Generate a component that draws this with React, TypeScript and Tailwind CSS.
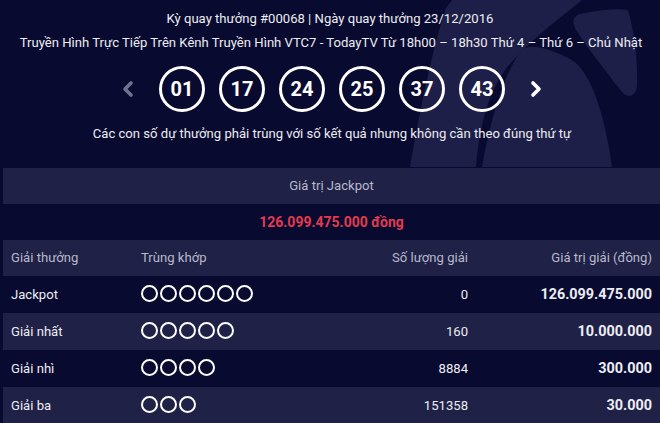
const balls = ['01', '17', '24', '25', '37', '43']

const prizes = [
  { name: 'Jackpot', match: 6, count: '0', value: '126.099.475.000' },
  { name: 'Giải nhất', match: 5, count: '160', value: '10.000.000' },
  { name: 'Giải nhì', match: 4, count: '8884', value: '300.000' },
  { name: 'Giải ba', match: 3, count: '151358', value: '30.000' },
]

function Watermark() {
  return (
    <svg className="absolute left-0 top-0" width="660" height="167" viewBox="0 0 660 167">
      <g fill="#1d1f48">
        <path d="M452 0 L582 0 C560 18 530 40 508 66 C490 90 480 120 476 167 L410 167 C420 110 432 50 446 8 Z" />
        <path d="M522 50 C530 44 545 46 572 60 C590 72 604 110 612 167 L482 167 C490 120 505 70 522 50 Z" />
        <path d="M580 14 C600 10 618 8 628 10 C634 30 638 60 637 86 C636 96 628 99 622 92 C605 70 585 45 575 28 C572 20 574 16 580 14 Z" />
      </g>
    </svg>
  )
}

function Chevron({ dir, color }: { dir: 'left' | 'right'; color: string }) {
  return (
    <div className="w-5 h-5 mx-[7px] flex items-center justify-center">
      <svg width="12" height="18" viewBox="0 0 12 18">
        <path
          d={dir === 'left' ? 'M9 3 L3 9 L9 15' : 'M3 3 L9 9 L3 15'}
          fill="none"
          stroke={color}
          strokeWidth="3.6"
          strokeLinecap="round"
          strokeLinejoin="round"
        />
      </svg>
    </div>
  )
}

export default function App() {
  return (
    <div
      className="relative w-[660px] h-[423px] overflow-hidden bg-[#080a2f] text-[#ededf3]"
      style={{ fontFamily: 'Roboto, "Noto Sans", sans-serif' }}
    >
      <Watermark />
      <div className="relative flex flex-col">
        <div className="pt-[9px] text-center text-[13.1px] leading-[20px]">
          Kỳ quay thưởng #00068 | Ngày quay thưởng 23/12/2016
        </div>
        <div className="pt-[4px] pl-[2px] text-center text-[13.1px] leading-[20px] whitespace-nowrap">
          Truyền Hình Trực Tiếp Trên Kênh Truyền Hình VTC7 - TodayTV Từ 18h00 – 18h30 Thứ 4 – Thứ 6 – Chủ Nhật
        </div>
        <div className="mt-[13px] flex items-center justify-center gap-[14px] pl-[4px]">
          <Chevron dir="left" color="#6f7190" />
          {balls.map((b) => (
            <div
              key={b}
              className="w-[46px] h-[46px] rounded-full border-[3px] border-white flex items-center justify-center text-[20px] font-bold text-white"
            >
              {b}
            </div>
          ))}
          <Chevron dir="right" color="#ffffff" />
        </div>
        <div className="mt-[12px] pl-[4px] text-center text-[13.1px] leading-[20px]">
          Các con số dự thưởng phải trùng với số kết quả nhưng không cần theo đúng thứ tự
        </div>

        <div className="mt-[24px] ml-[3px] flex flex-col">
          <div className="h-[36px] bg-[#1f2147] flex items-center justify-center text-[13.1px] text-[#b9bacb]">
            Giá trị Jackpot
          </div>
          <div className="h-[36px] flex items-center justify-center text-[14px] font-bold text-[#e23b4f]">
            126.099.475.000 đồng
          </div>
          <div className="h-[36px] bg-[#1f2147] grid grid-cols-[130px_1fr_150px_184px] items-center px-2 text-[13.1px] text-[#b9bacb]">
            <span>Giải thưởng</span>
            <span>Trùng khớp</span>
            <span className="text-right">Số lượng giải</span>
            <span className="text-right">Giá trị giải (đồng)</span>
          </div>
          {prizes.map((p, i) => (
            <div
              key={p.name}
              className={`h-[37px] grid grid-cols-[130px_1fr_150px_184px] items-center px-2 text-[13.1px] text-[#ededf3] ${
                i % 2 === 1 ? 'bg-[#1f2147]' : ''
              }`}
            >
              <span>{p.name}</span>
              <div className="flex gap-[2px] -mt-[3px]">
                {Array.from({ length: p.match }).map((_, k) => (
                  <div key={k} className="w-[17px] h-[17px] rounded-full border-2 border-white" />
                ))}
              </div>
              <span className="text-right">{p.count}</span>
              <span className="text-right text-[14.4px] font-bold">{p.value}</span>
            </div>
          ))}
        </div>
      </div>
    </div>
  )
}
